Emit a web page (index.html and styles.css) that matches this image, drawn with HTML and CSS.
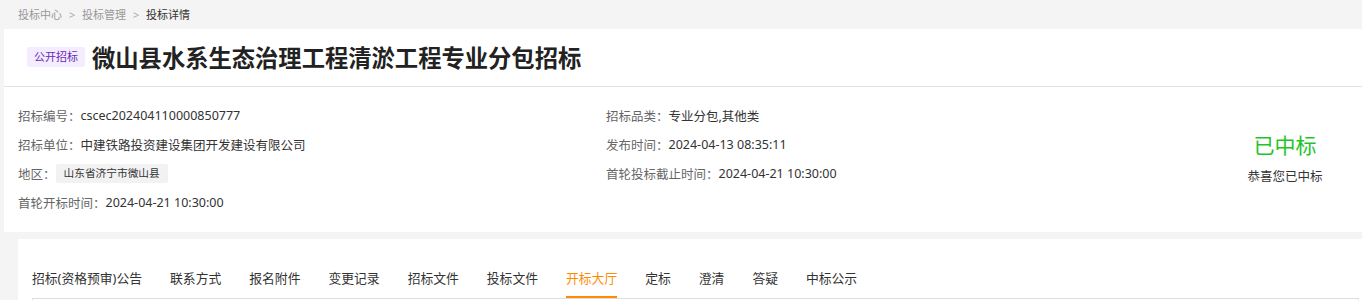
FILE: index.html
```html
<!DOCTYPE html>
<html lang="zh-CN">
<head>
    <meta charset="UTF-8">
    <meta name="viewport" content="width=device-width, initial-scale=1.0">
    <title>投标详情</title>
    <link rel="stylesheet" href="styles.css">
</head>
<body>
    <div class="crumbs">
        <span class="crumb">投标中心</span>
        <span class="sep">&gt;</span>
        <span class="crumb">投标管理</span>
        <span class="sep">&gt;</span>
        <span class="crumb current">投标详情</span>
    </div>

    <div class="card">
        <div class="head">
            <span class="tag">公开招标</span>
            <h1>微山县水系生态治理工程清淤工程专业分包招标</h1>
        </div>

        <div class="info">
            <div class="col">
                <div class="row"><span class="label">招标编号：</span><span class="value">cscec202404110000850777</span></div>
                <div class="row"><span class="label">招标单位：</span><span class="value">中建铁路投资建设集团开发建设有限公司</span></div>
                <div class="row"><span class="label">地区：</span><span class="area">山东省济宁市微山县</span></div>
                <div class="row"><span class="label">首轮开标时间：</span><span class="value">2024-04-21 10:30:00</span></div>
            </div>
            <div class="col">
                <div class="row"><span class="label">招标品类：</span><span class="value">专业分包,其他类</span></div>
                <div class="row"><span class="label">发布时间：</span><span class="value">2024-04-13 08:35:11</span></div>
                <div class="row"><span class="label">首轮投标截止时间：</span><span class="value">2024-04-21 10:30:00</span></div>
            </div>
            <div class="status">
                <div class="status-title">已中标</div>
                <div class="status-text">恭喜您已中标</div>
            </div>
        </div>
    </div>

    <div class="tabs-card">
        <ul class="tabs">
            <li>招标(资格预审)公告</li>
            <li>联系方式</li>
            <li>报名附件</li>
            <li>变更记录</li>
            <li>招标文件</li>
            <li>投标文件</li>
            <li class="active">开标大厅</li>
            <li>定标</li>
            <li>澄清</li>
            <li>答疑</li>
            <li>中标公示</li>
        </ul>
        <div class="panel"></div>
    </div>
</body>
</html>
```

FILE: styles.css
```css
* {
    margin: 0;
    padding: 0;
    box-sizing: border-box;
}

body {
    background-color: #f4f4f4;
    font-family: "Noto Sans", "Noto Sans CJK SC", sans-serif;
    color: #333;
}

.crumbs {
    height: 29px;
    line-height: 29px;
    padding-left: 18px;
    font-size: 11px;
    color: #999;
}

.crumbs .sep {
    margin: 0 4px;
    color: #aaa;
}

.crumbs .current {
    color: #333;
}

.card {
    margin-left: 4px;
    background-color: #fff;
}

.head {
    height: 58px;
    display: flex;
    align-items: center;
    padding-left: 23px;
    padding-bottom: 1px;
    border-bottom: 1px solid #e3e3e3;
}

.tag {
    height: 20px;
    line-height: 20px;
    padding: 0 7px;
    font-size: 11px;
    color: #6b2bb5;
    background-color: #f4ecff;
    border-radius: 2px;
}

h1 {
    margin-left: 7px;
    font-size: 23.3px;
    font-weight: bold;
    color: #222;
}

.info {
    display: grid;
    grid-template-columns: 588px 1fr 154px;
    padding: 14px 0 15px 14px;
}

.row {
    height: 29px;
    display: flex;
    align-items: center;
    font-size: 12.5px;
}

.label {
    color: #666;
}

.value {
    color: #333;
}

.area {
    height: 19px;
    line-height: 19px;
    padding: 0 8px;
    font-size: 10.7px;
    background-color: #f2f2f2;
    border-radius: 2px;
    color: #333;
}

.status {
    display: flex;
    flex-direction: column;
    align-items: center;
    justify-content: center;
    padding-bottom: 2px;
}

.status-title {
    line-height: 30px;
    font-size: 21px;
    color: #1fc42b;
}

.status-text {
    margin-top: 7px;
    line-height: 20px;
    font-size: 12.5px;
    color: #333;
}

.tabs-card {
    margin: 7px 0 0 18px;
    padding-top: 29px;
    background-color: #fff;
}

.tabs {
    list-style: none;
    display: flex;
    gap: 28px;
    padding-left: 14px;
}

.tabs li {
    line-height: 20px;
    padding-bottom: 8px;
    border-bottom: 2px solid transparent;
    font-size: 12.8px;
    color: #333;
}

.tabs li.active {
    color: #ff8c00;
    border-bottom-color: #ff8c00;
}

.panel {
    height: 40px;
    margin: 0 3px 0 14px;
    border: 1px solid #ddd;
}
```
